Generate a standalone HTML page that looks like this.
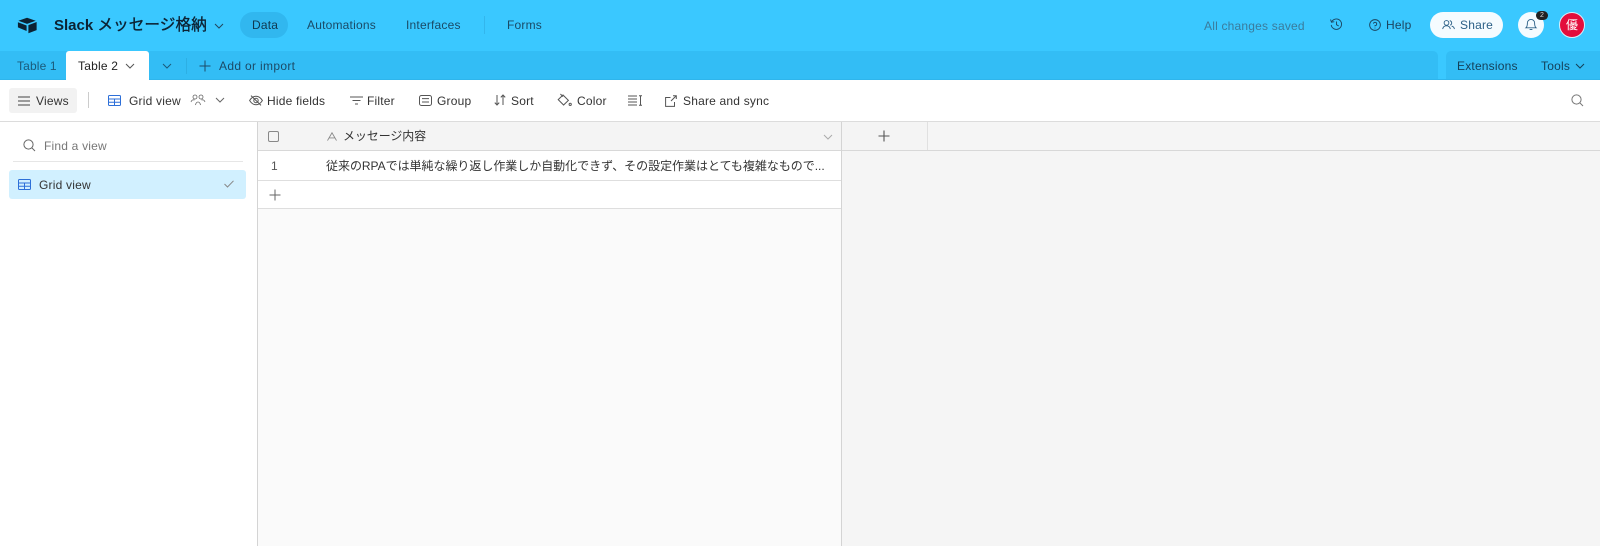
<!DOCTYPE html>
<html><head><meta charset="utf-8"><style>
html,body{margin:0;padding:0}
body{width:1600px;height:546px;overflow:hidden;background:#fff;position:relative;font-family:"Liberation Sans","Noto Sans CJK JP",sans-serif;color:#333;filter:blur(.35px)}
.a{position:absolute}
.t{position:absolute;white-space:nowrap;font-size:12px;line-height:16px;letter-spacing:.2px}
svg{position:absolute;fill:none;stroke:#555;stroke-width:1;overflow:visible}
</style></head><body>
<div class="a" style="left:0;top:0;width:1600px;height:80px;background:#3ac8ff"></div>
<div class="a" style="left:0;top:51px;width:1438px;height:28px;background:#33bdf5;border-radius:0 5px 0 0"></div>
<div class="a" style="left:1446px;top:51px;width:154px;height:28px;background:#33bdf5;border-radius:5px 0 0 0"></div>
<div class="a" style="left:0;top:79px;width:1600px;height:1px;background:#2fb5ec"></div>

<svg style="left:17px;top:17px;stroke:none;fill:#0c2233" width="21" height="17" viewBox="0 0 23 18"><path d="M11 0.5L20.5 3.8L11 7.2L1.5 3.8Z"/><path d="M12.5 8.6L21.5 5.2V14L12.5 17.5Z"/><path d="M1 5.4L10.5 9V15L1 11Z"/></svg>
<div class="t" style="left:54px;top:16px;font-size:15px;line-height:20px;color:#0c2233;letter-spacing:0"><b>Slack</b> <span style="font-size:15.7px;-webkit-text-stroke:.35px #0c2233">メッセージ格納</span></div>
<svg style="left:214px;top:23px;stroke:#23465c" width="10" height="6"><path d="M1 1L5 5L9 1"/></svg>
<div class="a" style="left:240px;top:12px;width:48px;height:26px;border-radius:13px;background:#31b7ef"></div>
<div class="t" style="left:252px;top:17px;color:#10384f">Data</div>
<div class="t" style="left:307px;top:17px;color:#1a4a66">Automations</div>
<div class="t" style="left:406px;top:17px;color:#1a4a66">Interfaces</div>
<div class="a" style="left:484px;top:16px;width:1px;height:18px;background:#33b6ec"></div>
<div class="t" style="left:507px;top:17px;color:#1a4a66">Forms</div>

<div class="t" style="left:1204px;top:18px;color:#3a7b9c">All changes saved</div>
<svg style="left:1330px;top:18px;stroke:#1c4560" width="13" height="13" viewBox="0 0 14 14"><path d="M1.8 4.2A5.6 5.6 0 1 1 1.3 7.5"/><path d="M0.6 1.6L1.6 4.6L4.6 4"/><path d="M7 3.8V7.2L9.4 8.6"/></svg>
<svg style="left:1369px;top:19px;stroke:#1c4560" width="12" height="12" viewBox="0 0 13 13"><circle cx="6.5" cy="6.5" r="5.8"/><path d="M4.8 5A1.8 1.8 0 1 1 6.5 7.2V8"/><path d="M6.5 9.4V10.2"/></svg>
<div class="t" style="left:1386px;top:17px;color:#1c4560">Help</div>
<div class="a" style="left:1430px;top:12px;width:73px;height:26px;border-radius:13px;background:#f5fbff"></div>
<svg style="left:1442px;top:20px;stroke:#2b5f86" width="13" height="10" viewBox="0 0 14 11"><circle cx="4.8" cy="3.2" r="2.6"/><path d="M0.6 10C1 7.4 2.8 6.4 4.8 6.4S8.6 7.4 9 10"/><path d="M8.4 0.7A2.6 2.6 0 0 1 8.8 5.7"/><path d="M10.4 6.7C12 7 13.2 8 13.5 10"/></svg>
<div class="t" style="left:1460px;top:17px;color:#2b5f86">Share</div>
<div class="a" style="left:1518px;top:12px;width:26px;height:26px;border-radius:50%;background:#f5fbff"></div>
<svg style="left:1525px;top:18px;stroke:#2b5f86" width="12" height="13" viewBox="0 0 13 14"><path d="M1 10.6C2.4 9.4 2.6 8 2.6 5.4A3.9 3.9 0 0 1 10.4 5.4C10.4 8 10.6 9.4 12 10.6Z"/><path d="M5 12.4H8"/></svg>
<div class="a" style="left:1536px;top:11px;width:12px;height:9px;border-radius:5px;background:#222;color:#ddd;font-size:7px;line-height:9px;text-align:center">2</div>
<div class="a" style="left:1559px;top:12px;width:26px;height:26px;box-sizing:border-box;border:1px solid #d8eefa;border-radius:50%;background:#e30d3c;color:#fff;font-size:12px;line-height:24px;text-align:center">優</div>

<div class="t" style="left:17px;top:58px;color:#1b5a7a;letter-spacing:.15px">Table 1</div>
<div class="a" style="left:66px;top:51px;width:83px;height:29px;background:#fff;border-radius:3px 3px 0 0"></div>
<div class="t" style="left:78px;top:58px;color:#222">Table 2</div>
<svg style="left:125px;top:63px;stroke:#555" width="10" height="6"><path d="M1 1L5 5L9 1"/></svg>
<svg style="left:162px;top:63px;stroke:#1c5a7a" width="10" height="6"><path d="M1 1L5 5L9 1"/></svg>
<div class="a" style="left:186px;top:58px;width:1px;height:16px;background:#2dafe4"></div>
<svg style="left:199px;top:60px;stroke:#1c4a66" width="12" height="12"><path d="M6 0.5V11.5M0.5 6H11.5"/></svg>
<div class="t" style="left:219px;top:58px;color:#1c4a66;letter-spacing:.33px">Add or import</div>
<div class="t" style="left:1457px;top:58px;color:#143f58">Extensions</div>
<div class="t" style="left:1541px;top:58px;color:#143f58">Tools</div>
<svg style="left:1575px;top:63px;stroke:#143f58" width="10" height="6"><path d="M1 1L5 5L9 1"/></svg>

<div class="a" style="left:9px;top:88px;width:68px;height:25px;border-radius:3px;background:#f2f2f2"></div>
<svg style="left:18px;top:96px;stroke:#444" width="12" height="10"><path d="M0 1H12M0 5H12M0 9H12"/></svg>
<div class="t" style="left:36px;top:93px;color:#333">Views</div>
<div class="a" style="left:88px;top:92px;width:1px;height:16px;background:#ccc"></div>
<svg style="left:108px;top:95px;stroke:#2d6fd8" width="13" height="11"><rect x=".5" y=".5" width="12" height="10" rx="1"/><path d="M.5 4H12.5M.5 7.3H12.5M6.5 4V10.5"/></svg>
<div class="t" style="left:129px;top:93px;color:#333">Grid view</div>
<svg style="left:190px;top:94px;stroke:#666;stroke-width:.8" width="16" height="12" viewBox="0 0 16 12"><circle cx="5" cy="3" r="2"/><circle cx="11" cy="3" r="2"/><path d="M1 8C1.5 6 3 5.5 4.5 6M15 8C14.5 6 13 5.5 11.5 6"/><path d="M5.5 11C6 8.5 7 8 8 8S10 8.5 10.5 11"/></svg>
<svg style="left:215px;top:97px;stroke:#666" width="10" height="6"><path d="M1 1L5 5L9 1"/></svg>
<svg style="left:249px;top:95px;stroke:#555" width="14" height="11" viewBox="0 0 14 11"><path d="M.6 5.5C2.5 2.4 4.6 1.2 7 1.2S11.5 2.4 13.4 5.5C11.5 8.6 9.4 9.8 7 9.8S2.5 8.6.6 5.5Z"/><circle cx="7" cy="5.5" r="2.2"/><path d="M2 .6L12 10.4"/></svg>
<div class="t" style="left:267px;top:93px;color:#333">Hide fields</div>
<svg style="left:350px;top:96px;stroke:#555" width="13" height="9"><path d="M0 1H13M2.5 4.5H10.5M5 8H8"/></svg>
<div class="t" style="left:367px;top:93px;color:#333">Filter</div>
<svg style="left:419px;top:95px;stroke:#555" width="13" height="11"><rect x=".5" y=".5" width="12" height="10" rx="2"/><path d="M3 3.6H10M3 7H10"/></svg>
<div class="t" style="left:437px;top:93px;color:#333">Group</div>
<svg style="left:494px;top:94px;stroke:#555" width="12" height="12"><path d="M3 1V11M.8 8.6L3 11L5.2 8.6M9 11V1M6.8 3.4L9 1L11.2 3.4"/></svg>
<div class="t" style="left:511px;top:93px;color:#333">Sort</div>
<svg style="left:557px;top:93px;stroke:#555" width="15" height="14" viewBox="0 0 15 14"><path d="M6 2L11.4 7.4L6.6 12L1.2 6.6Z"/><path d="M3.4 1L6 3.6"/><circle cx="13.2" cy="11.4" r="1.1"/></svg>
<div class="t" style="left:577px;top:93px;color:#333">Color</div>
<svg style="left:628px;top:95px;stroke:#555" width="14" height="11"><path d="M0 1H9M0 4H9M0 7H9M0 10H9M12.5 1V10M11 .7H14M11 10.3H14"/></svg>
<svg style="left:665px;top:95px;stroke:#555" width="12" height="12"><path d="M5.5 2.5H.6V11.4H9.5V7M6 6L11 1M8 .7H11.3V4"/></svg>
<div class="t" style="left:683px;top:93px;color:#333">Share and sync</div>
<svg style="left:1571px;top:94px;stroke:#777" width="13" height="13"><circle cx="5.5" cy="5.5" r="4.6"/><path d="M9 9L12 12"/></svg>

<div class="a" style="left:0;top:121px;width:1600px;height:1px;background:#dcdcdc"></div>
<div class="a" style="left:258px;top:122px;width:1342px;height:424px;background:#f5f5f5"></div>
<div class="a" style="left:258px;top:209px;width:583px;height:337px;background:#fafafa"></div>
<div class="a" style="left:258px;top:122px;width:583px;height:28px;background:#f4f4f4"></div>
<div class="a" style="left:842px;top:122px;width:85px;height:28px;background:#f4f4f4"></div>
<div class="a" style="left:258px;top:151px;width:583px;height:58px;background:#fff"></div>
<div class="a" style="left:258px;top:150px;width:1342px;height:1px;background:#d8d8d8"></div>
<div class="a" style="left:258px;top:180px;width:583px;height:1px;background:#dedede"></div>
<div class="a" style="left:258px;top:208px;width:583px;height:1px;background:#dedede"></div>
<div class="a" style="left:257px;top:122px;width:1px;height:424px;background:#d4d4d4"></div>
<div class="a" style="left:841px;top:122px;width:1px;height:424px;background:#d4d4d4"></div>
<div class="a" style="left:927px;top:122px;width:1px;height:28px;background:#e0e0e0"></div>

<svg style="left:268px;top:131px;stroke:#888" width="11" height="11"><rect x=".5" y=".5" width="10" height="10" rx="1.5"/></svg>
<svg style="left:327px;top:132px;stroke:#888" width="10" height="9" viewBox="0 0 11 10"><path d="M.5 9.5L5.5 .8L10.5 9.5M2.6 6.6H8.4"/></svg>
<div class="t" style="left:343px;top:128px;color:#333;letter-spacing:-.1px">メッセージ内容</div>
<svg style="left:823px;top:134px;stroke:#aaa" width="10" height="6"><path d="M1 1L5 5L9 1"/></svg>
<svg style="left:878px;top:130px;stroke:#555;stroke-width:1.1" width="12" height="12"><path d="M6 .5V11.5M.5 6H11.5"/></svg>
<div class="t" style="left:271px;top:158px;color:#555">1</div>
<div class="t" style="left:326px;top:158px;color:#333;letter-spacing:-.03px">従来のRPAでは単純な繰り返し作業しか自動化できず、その設定作業はとても複雑なもので...</div>
<svg style="left:269px;top:189px;stroke:#666" width="12" height="12"><path d="M6 .5V11.5M.5 6H11.5"/></svg>

<svg style="left:23px;top:139px;stroke:#666" width="13" height="13"><circle cx="5.5" cy="5.5" r="4.6"/><path d="M9 9L12 12"/></svg>
<div class="t" style="left:44px;top:138px;color:#777">Find a view</div>
<div class="a" style="left:13px;top:161px;width:230px;height:1px;background:#e6e6e6"></div>
<div class="a" style="left:9px;top:170px;width:237px;height:29px;border-radius:3px;background:#d1f0ff"></div>
<svg style="left:18px;top:179px;stroke:#2d6fd8" width="13" height="11"><rect x=".5" y=".5" width="12" height="10" rx="1"/><path d="M.5 4H12.5M.5 7.3H12.5M6.5 4V10.5"/></svg>
<div class="t" style="left:39px;top:177px;color:#333">Grid view</div>
<svg style="left:224px;top:180px;stroke:#888" width="10" height="8"><path d="M.5 4L3.5 7L9.5 .8"/></svg>
</body></html>
